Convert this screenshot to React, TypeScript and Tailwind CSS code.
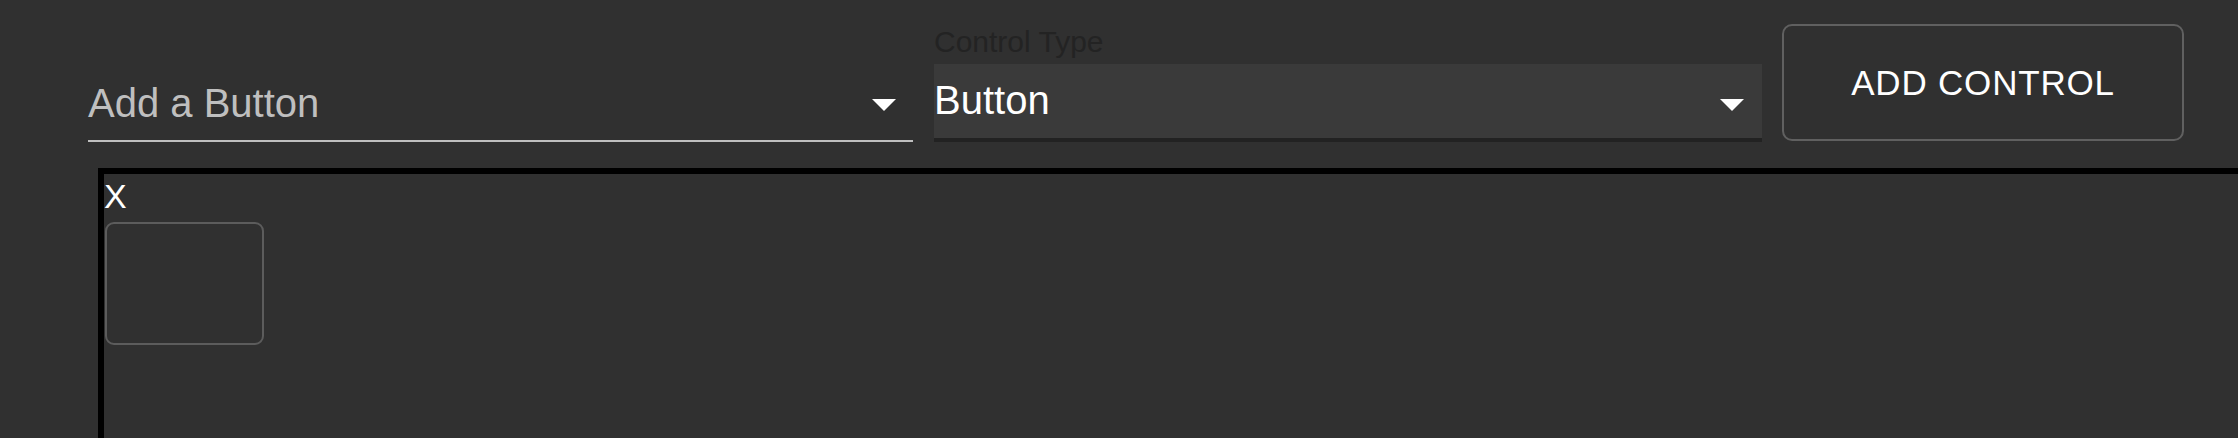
import React from 'react';

function Caret() {
  return (
    <svg width="24" height="12" viewBox="0 0 24 12" className="shrink-0">
      <polygon points="0,0 24,0 12,12" fill="#ffffff" />
    </svg>
  );
}

export default function App() {
  return (
    <div className="h-[438px] w-full overflow-hidden bg-[#303030] font-['Liberation_Sans',Arial,sans-serif]">
      {/* top controls */}
      <div className="flex h-[142px] items-end pl-[88px]">
        {/* name select (standard) */}
        <div className="flex w-[825px] shrink-0 items-start justify-between border-b-2 border-[#bfbfbf] pb-[17px] pr-[17px]">
          <span className="text-[40px] leading-[40px] text-[#bfbfbf]">Add a Button</span>
          <div className="mt-[16px]">
            <Caret />
          </div>
        </div>

        {/* control type select (filled) */}
        <div className="ml-[21px] flex w-[828px] shrink-0 flex-col">
          <label className="mb-[7px] text-[30px] leading-[30px] text-[#232323]">Control Type</label>
          <div className="box-border flex h-[78px] items-start justify-between border-b-4 border-[#222222] bg-[#3a3a3a] pt-[16px] pr-[18px]">
            <span className="text-[40px] leading-[40px] text-white">Button</span>
            <div className="mt-[19px]">
              <Caret />
            </div>
          </div>
        </div>

        <button className="mb-[1px] ml-[20px] box-border flex h-[117px] w-[402px] shrink-0 items-center justify-center rounded-[10px] border-2 border-[#606060] text-[35px] uppercase leading-[35px] tracking-[0.8px] text-white">
          Add Control
        </button>
      </div>

      {/* canvas */}
      <div className="ml-[98px] mt-[26px] h-[420px] w-[2300px] border-[6px] border-black">
        <div className="mt-[5px] text-[34px] leading-[34px] text-white">X</div>
        <div className="ml-[1px] mt-[9px] box-border h-[123px] w-[159px] rounded-[9px] border-2 border-[#5c5c5c]" />
      </div>
    </div>
  );
}
